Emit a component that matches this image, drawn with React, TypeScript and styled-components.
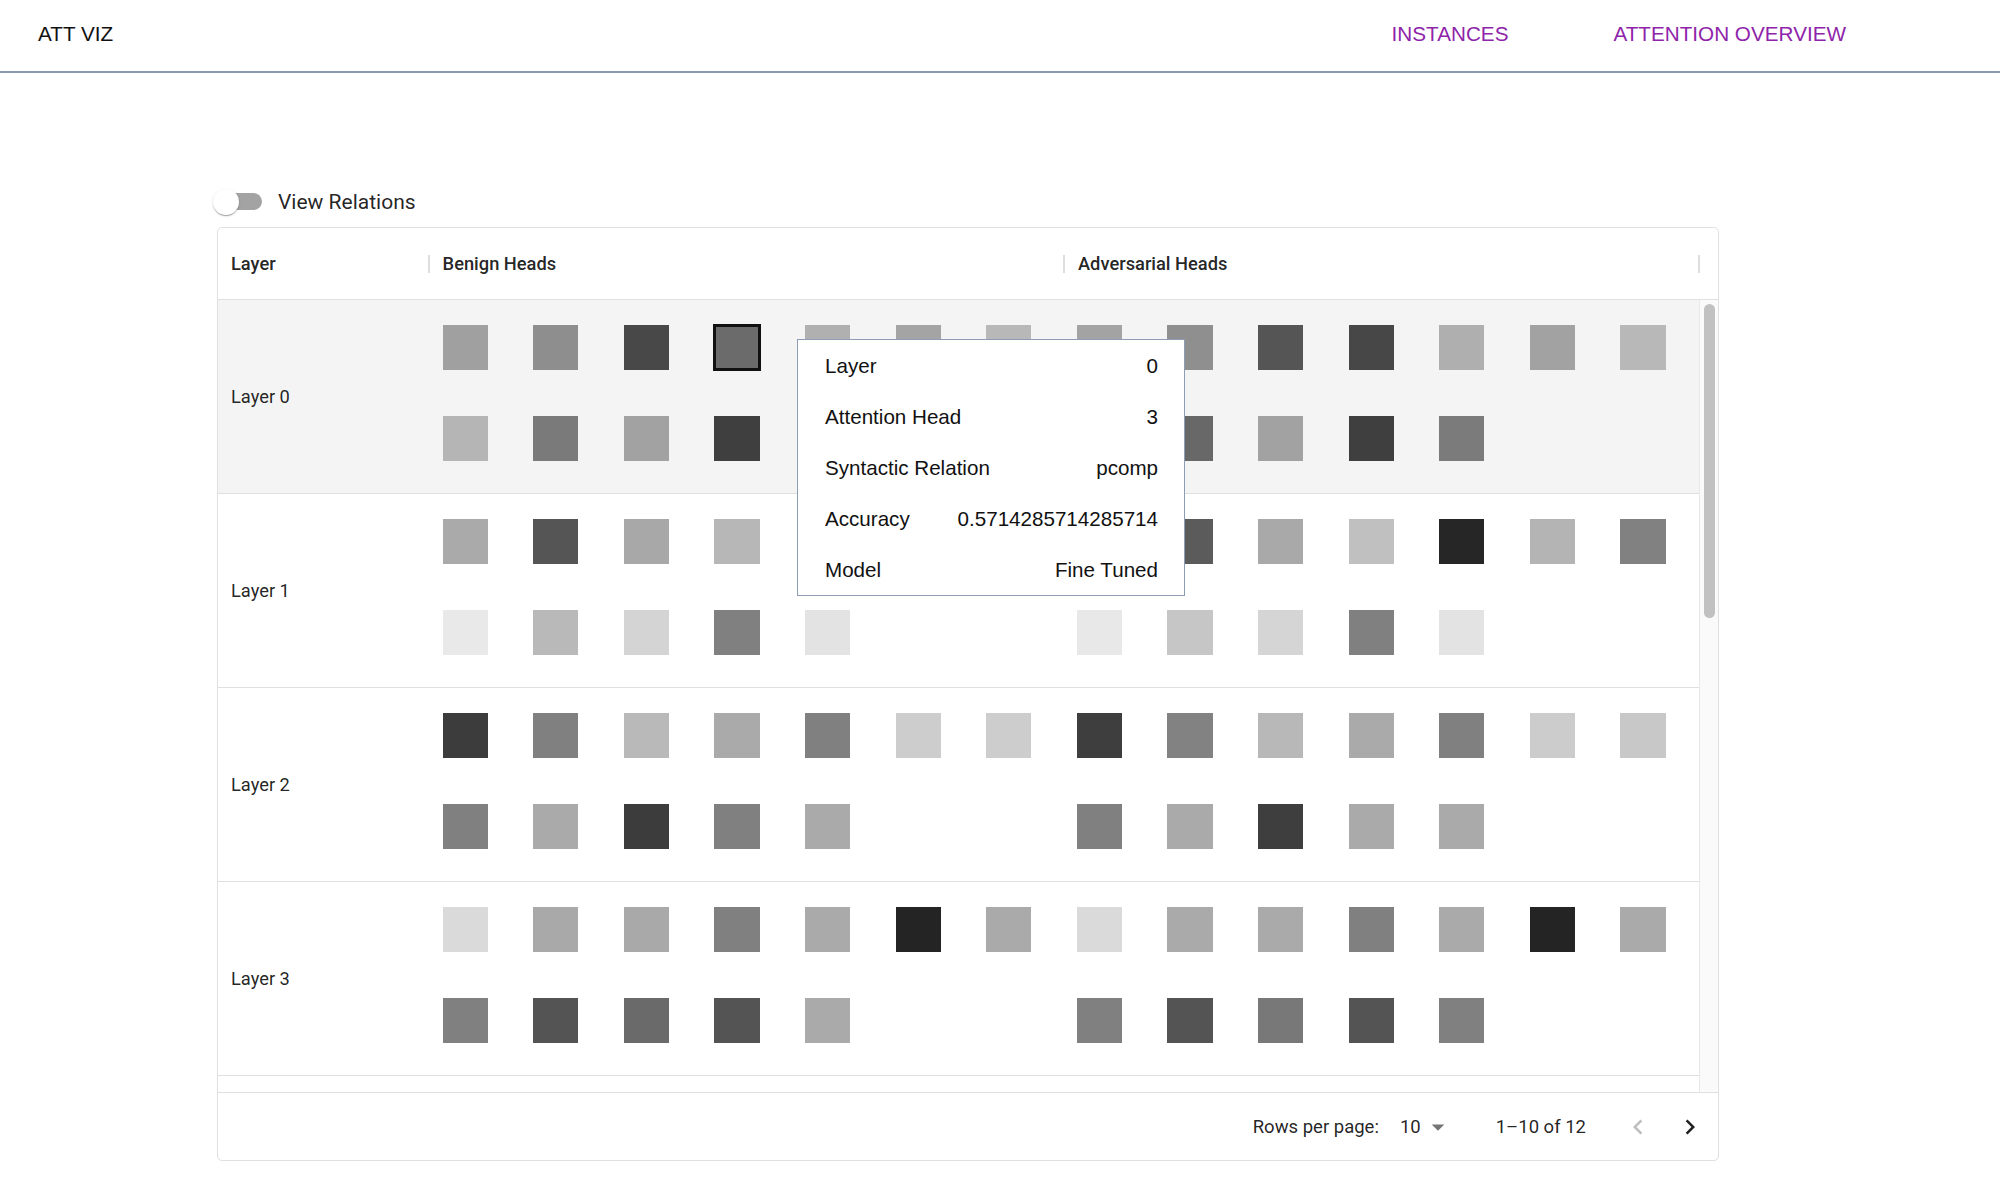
import React from "react";
import styled, { createGlobalStyle } from "styled-components";

const GlobalStyle = createGlobalStyle`
  body {
    margin: 0;
    background: #fff;
    font-family: Roboto, "Noto Sans", sans-serif;
  }
`;

type Layer = { name: string; benign: string[]; adversarial: string[] };

const layers: Layer[] = [
  {
    name: "Layer 0",
    benign: ["#a0a0a0", "#8e8e8e", "#484848", "#6b6b6b", "#b0b0b0", "#a4a4a4", "#b8b8b8", "#b5b5b5", "#7a7a7a", "#a2a2a2", "#3f3f3f", "#999999"],
    adversarial: ["#a3a3a3", "#8f8f8f", "#555555", "#474747", "#afafaf", "#a2a2a2", "#b8b8b8", "#8a8a8a", "#686868", "#a2a2a2", "#3f3f3f", "#7b7b7b"],
  },
  {
    name: "Layer 1",
    benign: ["#aaaaaa", "#555555", "#a8a8a8", "#b7b7b7", "#a0a0a0", "#b0b0b0", "#909090", "#e9e9e9", "#b9b9b9", "#d4d4d4", "#808080", "#e3e3e3"],
    adversarial: ["#bcbcbc", "#5b5b5b", "#a9a9a9", "#c0c0c0", "#262626", "#b4b4b4", "#818181", "#e8e8e8", "#c6c6c6", "#d5d5d5", "#808080", "#e3e3e3"],
  },
  {
    name: "Layer 2",
    benign: ["#3c3c3c", "#808080", "#b9b9b9", "#aaaaaa", "#808080", "#cdcdcd", "#cdcdcd", "#808080", "#aaaaaa", "#3c3c3c", "#808080", "#aaaaaa"],
    adversarial: ["#3e3e3e", "#828282", "#b8b8b8", "#aaaaaa", "#808080", "#cccccc", "#c8c8c8", "#808080", "#aaaaaa", "#3e3e3e", "#aaaaaa", "#aaaaaa"],
  },
  {
    name: "Layer 3",
    benign: ["#dadada", "#a9a9a9", "#a9a9a9", "#808080", "#aaaaaa", "#242424", "#aaaaaa", "#808080", "#545454", "#6a6a6a", "#545454", "#aaaaaa"],
    adversarial: ["#dadada", "#aaaaaa", "#aaaaaa", "#808080", "#aaaaaa", "#242424", "#aaaaaa", "#808080", "#545454", "#787878", "#545454", "#808080"],
  },
];

const tooltip = [
  ["Layer", "0"],
  ["Attention Head", "3"],
  ["Syntactic Relation", "pcomp"],
  ["Accuracy", "0.5714285714285714"],
  ["Model", "Fine Tuned"],
];

const Chevron = ({ dir, color }: { dir: "left" | "right"; color: string }) => (
  <svg width="30" height="30" viewBox="0 0 24 24" fill={color}>
    {dir === "left" ? (
      <path d="M15.41 16.59L10.83 12l4.58-4.59L14 6l-6 6 6 6 1.41-1.41z" />
    ) : (
      <path d="M8.59 16.59L13.17 12 8.59 7.41 10 6l6 6-6 6-1.41-1.41z" />
    )}
  </svg>
);

const App = () => {
  return (
    <>
      <GlobalStyle />
      <TopBar>
        <Brand>ATT VIZ</Brand>
        <Nav>
          <NavLink>INSTANCES</NavLink>
          <NavLink>ATTENTION OVERVIEW</NavLink>
        </Nav>
      </TopBar>
      <Main>
        <ToggleRow>
          <SwitchBox>
            <Track />
            <Knob />
          </SwitchBox>
          View Relations
        </ToggleRow>
        <Card>
          <HeadRow>
            <HeadCell $w={210} $pl={13}>Layer</HeadCell>
            <Sep />
            <HeadCell $w={633} $pl={12.6}>Benign Heads</HeadCell>
            <Sep />
            <HeadCell $w={633} $pl={13}>Adversarial Heads</HeadCell>
            <Sep />
          </HeadRow>
          <Body>
            <Rows>
              {layers.map((layer, li) => (
                <Row key={layer.name} $hover={li === 0}>
                  <LayerCell>{layer.name}</LayerCell>
                  <HeadGrid>
                    {layer.benign.map((c, i) => (
                      <Square key={`b${i}`} $c={c} $active={li === 0 && i === 3} />
                    ))}
                  </HeadGrid>
                  <HeadGrid>
                    {layer.adversarial.map((c, i) => (
                      <Square key={`a${i}`} $c={c} />
                    ))}
                  </HeadGrid>
                </Row>
              ))}
              {/* next row peeks in below the fold of the scroller */}
              <Row />
              <Tooltip>
                {tooltip.map(([k, v]) => (
                  <TipRow key={k}>
                    <span>{k}</span>
                    <span>{v}</span>
                  </TipRow>
                ))}
              </Tooltip>
            </Rows>
            <ScrollTrack>
              <ScrollThumb />
            </ScrollTrack>
          </Body>
          <Footer>
            <span>Rows per page:</span>
            <PageSize>
              10
              <svg width="30" height="30" viewBox="0 0 24 24" fill="#757575">
                <path d="M7 10l5 5 5-5z" />
              </svg>
            </PageSize>
            <Range>1–10 of 12</Range>
            <PageButton $first>
              <Chevron dir="left" color="#bdbdbd" />
            </PageButton>
            <PageButton>
              <Chevron dir="right" color="#1f1f1f" />
            </PageButton>
          </Footer>
        </Card>
      </Main>
    </>
  );
};

export default App;

const TopBar = styled.header`
  height: 49px;
  display: flex;
  align-items: flex-start;
  padding: 22px 154px 0 38px;
  border-bottom: 2px solid #8798b0;
  font-family: "Liberation Sans", Arial, sans-serif;
  font-size: 20.7px;
`;

const Brand = styled.div`
  color: #111;
`;

const Nav = styled.nav`
  margin-left: auto;
  display: flex;
  gap: 105px;
`;

const NavLink = styled.a`
  color: #8e24aa;
  cursor: pointer;
`;

const Main = styled.main`
  padding: 104px 0 40px 217px;
`;

const ToggleRow = styled.label`
  display: flex;
  align-items: center;
  height: 50px;
  margin-left: -4px;
  font-size: 21px;
  color: rgba(0, 0, 0, 0.87);
`;

const SwitchBox = styled.span`
  position: relative;
  width: 50px;
  height: 26px;
  margin-right: 15px;
`;

const Track = styled.span`
  position: absolute;
  left: 6px;
  top: 4px;
  width: 43px;
  height: 17px;
  border-radius: 9px;
  background: #a3a3a3;
`;

const Knob = styled.span`
  position: absolute;
  left: 0;
  top: 0;
  width: 26px;
  height: 26px;
  border-radius: 50%;
  background: #fff;
  box-shadow: 0 2px 1px -1px rgba(0, 0, 0, 0.2), 0 1px 1px 0 rgba(0, 0, 0, 0.14),
    0 1px 3px 0 rgba(0, 0, 0, 0.12);
`;

const Card = styled.section`
  width: 1502px;
  box-sizing: border-box;
  border: 1px solid #e0e0e0;
  border-radius: 5px;
  overflow: hidden;
  color: rgba(0, 0, 0, 0.87);
`;

const HeadRow = styled.div`
  display: flex;
  align-items: center;
  height: 71px;
  border-bottom: 1px solid #e0e0e0;
  font-size: 18.3px;
  font-weight: 500;
`;

const HeadCell = styled.div<{ $w: number; $pl: number }>`
  width: ${({ $w }) => $w}px;
  padding-left: ${({ $pl }) => $pl}px;
  box-sizing: border-box;
`;

const Sep = styled.span`
  width: 2px;
  height: 18px;
  background: #dedede;
`;

const Body = styled.div`
  display: flex;
  height: 792px;
  border-bottom: 1px solid #e0e0e0;
`;

const Rows = styled.div`
  position: relative;
  width: 1481px;
  overflow: hidden;
`;

const Row = styled.div<{ $hover?: boolean }>`
  display: flex;
  height: 194px;
  box-sizing: border-box;
  border-bottom: 1px solid #e0e0e0;
  background: ${({ $hover }) => ($hover ? "#f4f4f4" : "#fff")};
`;

const LayerCell = styled.div`
  width: 212px;
  padding-left: 13px;
  box-sizing: border-box;
  display: flex;
  align-items: center;
  font-size: 18.3px;
`;

const HeadGrid = styled.div`
  width: 634.2px;
  box-sizing: border-box;
  padding: 25px 0 0 12.6px;
  display: grid;
  grid-template-columns: repeat(7, 45.3px);
  column-gap: 45.3px;
  row-gap: 45.4px;
  align-content: start;
`;

const Square = styled.span<{ $c: string; $active?: boolean }>`
  width: 45.3px;
  height: 45.3px;
  background: ${({ $c }) => $c};
  box-shadow: ${({ $active }) =>
    $active ? "0 0 0 1px #111, inset 0 0 0 2px #111" : "none"};
`;

const Tooltip = styled.div`
  position: absolute;
  left: 579px;
  top: 39px;
  width: 388px;
  box-sizing: border-box;
  border: 1px solid #8c9db4;
  background: #fff;
  font-family: "Liberation Sans", Arial, sans-serif;
  font-size: 20.6px;
  color: #111;
  z-index: 2;
`;

const TipRow = styled.div`
  display: flex;
  justify-content: space-between;
  align-items: center;
  height: 51px;
  padding: 0 26px 0 27px;
`;

const ScrollTrack = styled.div`
  width: 19px;
  box-sizing: border-box;
  border-left: 1px solid #e8e8e8;
  background: #fafafa;
  padding-top: 4px;
`;

const ScrollThumb = styled.div`
  margin-left: 4px;
  width: 11px;
  height: 314px;
  border-radius: 6px;
  background: #c1c1c1;
`;

const Footer = styled.div`
  height: 67px;
  display: flex;
  align-items: center;
  justify-content: flex-end;
  padding-right: 13px;
  font-size: 18.5px;
`;

const PageSize = styled.div`
  display: flex;
  align-items: center;
  gap: 2px;
  margin-left: 21px;
`;

const Range = styled.span`
  margin-left: 43px;
`;

const PageButton = styled.span<{ $first?: boolean }>`
  display: flex;
  width: 30px;
  height: 30px;
  margin-left: ${({ $first }) => ($first ? "37px" : "22px")};
`;
